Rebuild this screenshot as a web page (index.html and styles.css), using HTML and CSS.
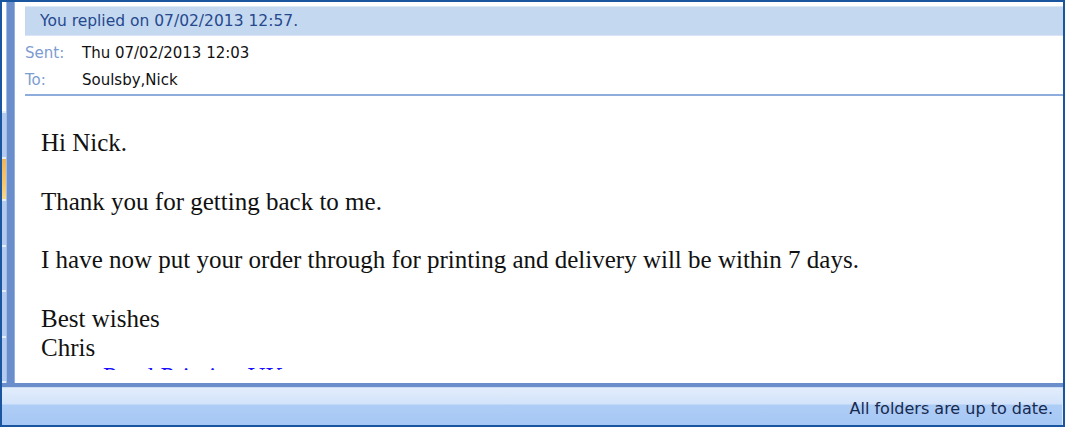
FILE: index.html
```html
<!DOCTYPE html>
<html>
<head>
<meta charset="utf-8">
<link rel="stylesheet" href="styles.css">
</head>
<body>
<div class="window">
  <div class="main">
    <div class="nav">
      <div class="nav-top"></div>
      <div class="seg"></div>
      <div class="seg active"></div>
      <div class="seg"></div>
      <div class="seg"></div>
      <div class="seg"></div>
      <div class="seg"></div>
      <div class="seg last"></div>
    </div>
    <div class="vbar"></div>
    <div class="reading">
      <div class="infobar">You replied on 07/02/2013 12:57.</div>
      <div class="meta">
        <div class="row"><span class="label">Sent:</span><span class="value">Thu 07/02/2013 12:03</span></div>
        <div class="row"><span class="label">To:</span><span class="value">Soulsby,Nick</span></div>
      </div>
      <div class="body">
        <p>Hi Nick.</p>
        <p>Thank you for getting back to me.</p>
        <p>I have now put your order through for printing and delivery will be within 7 days.</p>
        <p>Best wishes<br>Chris<br><span class="sig">Pearl Printing UK</span></p>
      </div>
    </div>
  </div>
  <div class="hbar"></div>
  <div class="status"><span class="status-text">All folders are up to date.</span></div>
</div>
</body>
</html>
```
FILE: styles.css
```css
html, body {
  margin: 0;
  padding: 0;
  background: #ffffff;
}
body {
  width: 1066px;
  height: 429px;
  overflow: hidden;
}
.window {
  box-sizing: border-box;
  width: 1065px;
  height: 427px;
  border: 2px solid #1a56a0;
  display: flex;
  flex-direction: column;
  background: #ffffff;
}
.main {
  display: flex;
  height: 381px;
}
.nav {
  width: 4px;
  display: flex;
  flex-direction: column;
}
.nav-top {
  height: 121px;
  background: #ffffff;
}
.seg {
  height: 48px;
  background: #b4cbef;
  border-top: 2px solid #e6eefa;
}
.seg.active {
  height: 45px;
  background: linear-gradient(#f0b45c, #f4c66e 60%, #f6d88c);
  border-top: 2px solid #e6eefa;
}
.seg:first-of-type {
  height: 13px;
}
.seg.last {
  flex: 1;
}
.vbar {
  width: 7px;
  background: #6a8ecb;
  border-left: 1px solid #a3bce6;
  border-right: 1px solid #93b0e0;
}
.reading {
  flex: 1;
  padding: 4px 0 0 10px;
  display: flex;
  flex-direction: column;
  min-width: 0;
}
.infobar {
  height: 28px;
  border-top: 1px solid #dde8f7;
  border-bottom: 1px solid #d9e5f6;
  background: #c4d8f0;
  font-family: "DejaVu Sans", Verdana, sans-serif;
  font-size: 15.5px;
  line-height: 28px;
  color: #26498d;
  padding-left: 15px;
  white-space: nowrap;
}
.meta {
  padding-top: 4px;
  height: 54px;
  border-bottom: 2px solid #8eaddc;
  font-family: "DejaVu Sans", Verdana, sans-serif;
  font-size: 15px;
}
.row {
  display: flex;
  height: 27px;
  line-height: 27px;
}
.label {
  width: 57px;
  color: #7d9cd0;
}
.value {
  color: #111111;
}
.body {
  height: 274px;
  overflow: hidden;
  padding-left: 16px;
  padding-top: 32px;
  box-sizing: border-box;
  font-family: "Liberation Serif", "Times New Roman", serif;
  font-size: 25px;
  line-height: 29.3px;
  color: #111111;
}
.body p {
  margin: 0 0 29.3px 0;
  white-space: nowrap;
}
.sig {
  display: inline-block;
  padding-left: 62px;
  color: #1a10ff;
}
.hbar {
  height: 4px;
  background: #6a8ecb;
  border-bottom: 1px solid #cbdcf5;
}
.status {
  flex: 1;
  display: flex;
  justify-content: flex-end;
  align-items: center;
  background: linear-gradient(#e2edfc 0px, #d3e3fa 16px, #aecdf6 17px, #a7c8f5 100%);
  border-right: 1px solid #dce8f8;
  padding-right: 9px;
}
.status-text {
  font-family: "DejaVu Sans", Verdana, sans-serif;
  font-size: 16px;
  color: #172a50;
  white-space: nowrap;
  margin-top: 4px;
}
```
